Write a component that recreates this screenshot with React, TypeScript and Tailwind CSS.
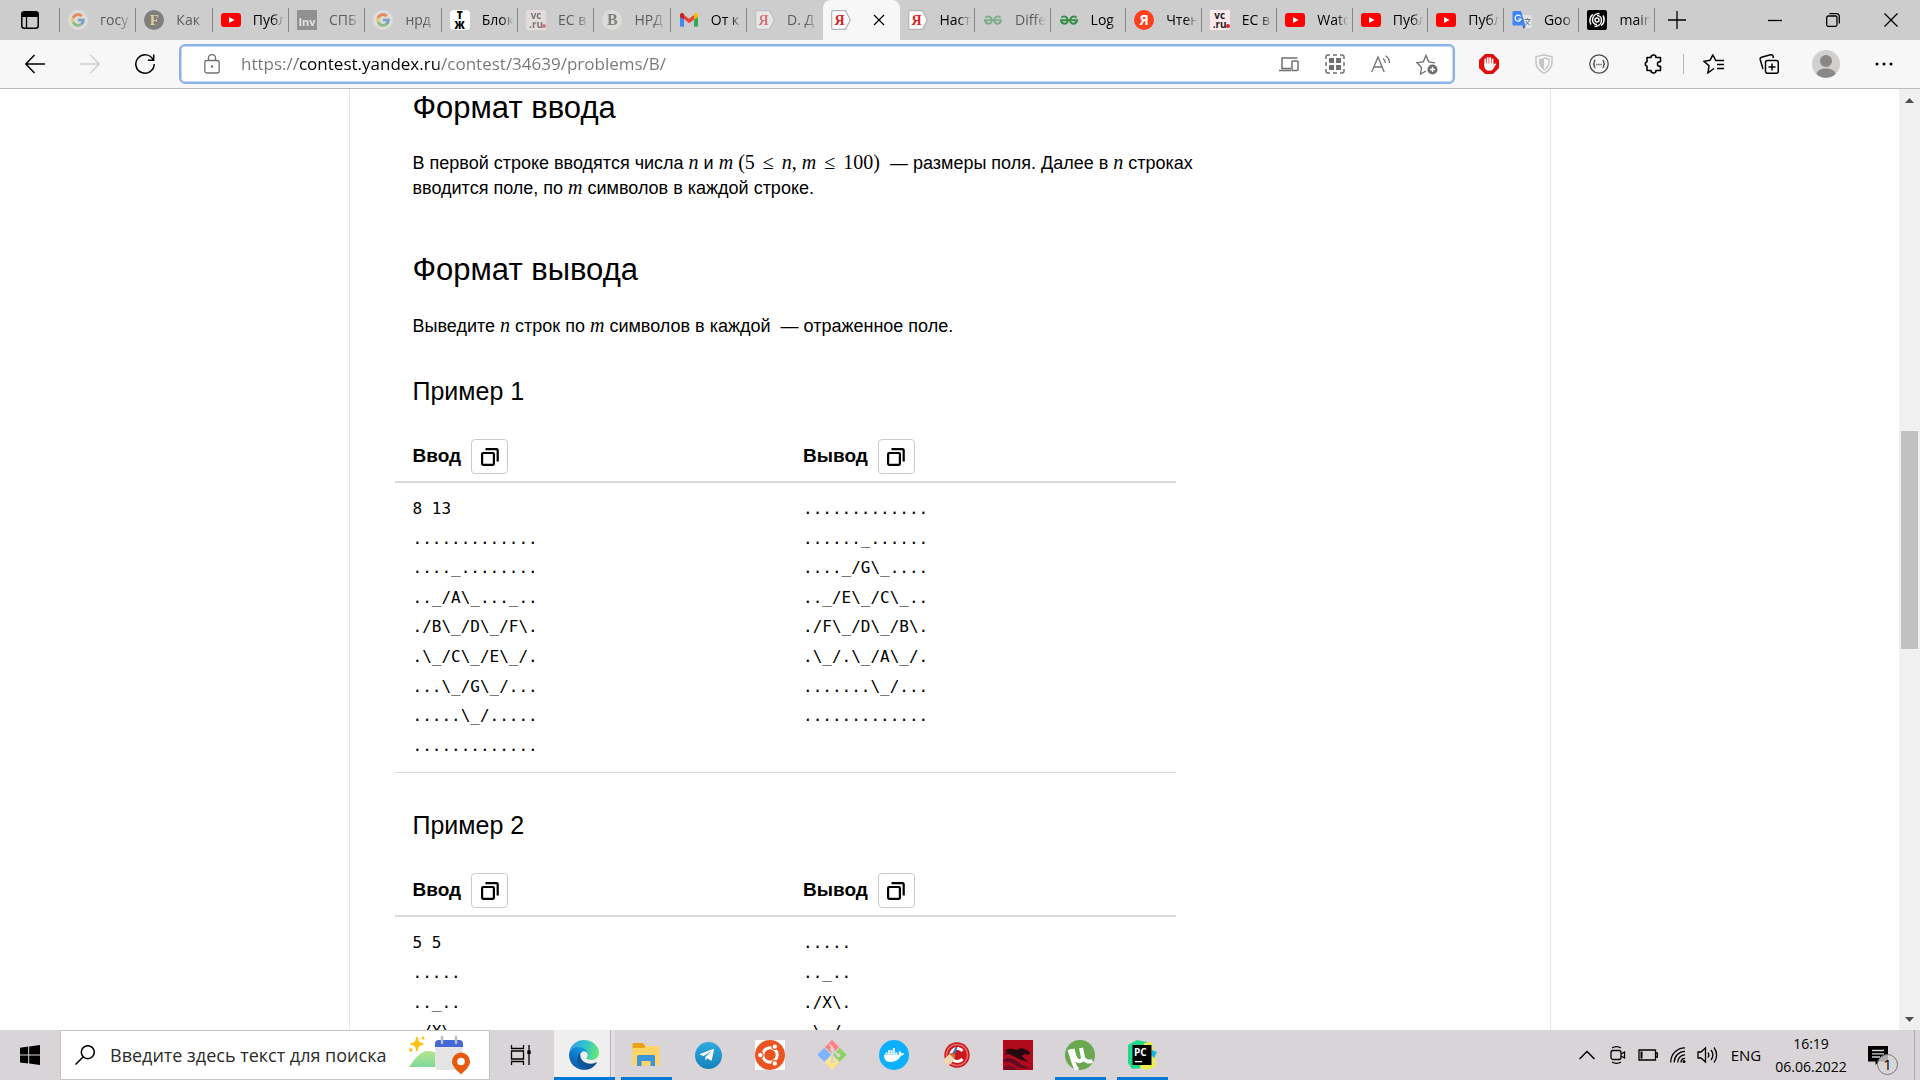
import React from 'react';
import { FaDocker, FaTelegramPlane } from 'react-icons/fa';
import { FcGoogle } from 'react-icons/fc';

type IconProps = { children: React.ReactNode; className?: string; box?: string };

function Line({ children, className = 'size-6', box = '0 0 24 24' }: IconProps) {
  return (
    <svg viewBox={box} className={className} fill="none" stroke="currentColor" strokeWidth="1.3" aria-hidden="true">
      {children}
    </svg>
  );
}

/* ---------- favicons ---------- */

const GoogleIcon = () => (
  <span className="flex size-5 items-center justify-center rounded-full bg-white/60">
    <FcGoogle className="size-4" />
  </span>
);

const YoutubeIcon = () => (
  <svg viewBox="0 0 20 20" className="size-5" aria-hidden="true">
    <rect x="0" y="3" width="20" height="14" rx="3" fill="#f00" />
    <path d="M8 7l5.500 3L8 13z" fill="#fff" />
  </svg>
);

const ForbesIcon = () => (
  <span className="flex size-5 items-center justify-center rounded-full bg-[#333] font-['Liberation_Serif',serif] text-[15px] leading-none font-bold text-[#f5d060]">
    F
  </span>
);

const InvIcon = () => (
  <span className="flex size-5 items-end justify-center bg-[#555] font-['Open_Sans',sans-serif] text-[11px] leading-[16px] font-bold text-white">
    Inv
  </span>
);

const TjIcon = () => (
  <span className="flex size-5 flex-col items-center justify-center rounded-sm bg-white font-['Open_Sans',sans-serif] text-[10px] leading-[10px] font-extrabold text-black">
    <span>Т</span>
    <span>Ж</span>
  </span>
);

const VcIcon = () => (
  <span className="relative flex size-5 flex-col items-center justify-center bg-[#fde8ec] font-['Open_Sans',sans-serif] text-[10px] leading-[9px] font-bold text-[#222]">
    <span>vc</span>
    <span>.ru</span>
    <span className="absolute right-0 bottom-0.5 size-1 rounded-full bg-[#e0202f]" />
  </span>
);

const BIcon = () => (
  <span className="flex size-5 items-center justify-center rounded-full bg-[#f0ece6] font-['Liberation_Serif',serif] text-[16px] leading-none font-bold text-[#333]">
    B
  </span>
);

const GmailIcon = () => (
  <svg viewBox="0 0 20 20" className="size-5" aria-hidden="true">
    <path d="M1 6v9.500a1.300 1.300 0 0 0 1.300 1.300H5V9z" fill="#4285f4" />
    <path d="M19 6v9.500a1.300 1.300 0 0 1-1.300 1.300H15V9z" fill="#34a853" />
    <path d="M5 9V5l5 3.800L15 5v4.500l-5 3.800z" fill="#ea4335" />
    <path d="M1 7V5c0-1.800 2-2.500 3.300-1.500L5 4v5.500z" fill="#c5221f" />
    <path d="M19 7V5c0-1.800-2-2.500-3.300-1.500L15 4v5.500z" fill="#fbbc04" />
  </svg>
);

const ContestIcon = () => (
  <svg viewBox="0 0 20 20" className="size-5" aria-hidden="true">
    <path d="M2 .7h12.500L19.300 10l-4.800 9.300H2a1.300 1.300 0 0 1-1.300-1.300V2A1.300 1.300 0 0 1 2 .7z" fill="#fff" stroke="#b3b3b3" strokeWidth="1.200" />
    <text x="8.500" y="15" textAnchor="middle" fontSize="14" fontWeight="bold" fontFamily="Liberation Serif, serif" fill="#d22">
      Я
    </text>
  </svg>
);

const GeeksIcon = () => (
  <svg viewBox="0 0 20 20" className="size-5" fill="none" stroke="#2f8d46" strokeWidth="1.900" aria-hidden="true">
    <path d="M1 10.200h18" />
    <path d="M2.500 7.800C4 5.500 7.800 6 8.800 9.800C9.200 14.800 3 15 2 10.500" />
    <path d="M17.500 7.800C16 5.500 12.200 6 11.200 9.800C10.800 14.800 17 15 18 10.500" />
  </svg>
);

const YandexIcon = () => (
  <span className="flex size-5 items-center justify-center rounded-full bg-[#fc3f1d] font-['Open_Sans',sans-serif] text-[14px] leading-none font-bold text-white">
    Я
  </span>
);

const TranslateIcon = () => (
  <svg viewBox="0 0 20 20" className="size-5" aria-hidden="true">
    <path d="M8 5h10.500a1 1 0 0 1 1 1v11a1 1 0 0 1-1 1H12z" fill="#e3e3e3" />
    <path d="M12.500 9.500h6M15.500 8.200v1.300M17.500 9.500c-.5 2.500-2 4-4 5.200M14 11c.8 1.800 2 3 3.800 3.700" stroke="#607d8b" strokeWidth="1" fill="none" />
    <path d="M10.500 15.500H14L11.500 19z" fill="#2f56c5" />
    <path d="M1.500 1H9l4.500 14.500h-12a1 1 0 0 1-1-1V2a1 1 0 0 1 1-1z" fill="#4285f4" />
    <path d="M8.600 6.500A3 3 0 1 0 9 9H6.300" stroke="#fff" strokeWidth="1.200" fill="none" />
  </svg>
);

const SwirlIcon = () => (
  <svg viewBox="0 0 20 20" className="size-5" fill="none" stroke="#fff" strokeWidth="1.500" aria-hidden="true">
    <rect width="20" height="20" rx="2" fill="#000" stroke="none" />
    <circle cx="10" cy="10" r="2" />
    <path d="M10 5.500a4.500 4.500 0 0 1 4.500 4.500c0 4-3 6.500-7 6.500M10 14.500A4.500 4.500 0 0 1 5.500 10c0-4 3-6.500 7-6.500" />
    <path d="M16 5.500c2 3 1.200 8-1.800 10.200M4 14.500C2 11.500 2.800 6.500 5.800 4.300" />
  </svg>
);

type TabInfo = { icon: React.FC; label: string; dim?: boolean };

const tabsBefore: TabInfo[] = [
  { icon: GoogleIcon, label: 'госу', dim: true },
  { icon: ForbesIcon, label: 'Как', dim: true },
  { icon: YoutubeIcon, label: 'Публ' },
  { icon: InvIcon, label: 'СПБ', dim: true },
  { icon: GoogleIcon, label: 'нрд', dim: true },
  { icon: TjIcon, label: 'Блок' },
  { icon: VcIcon, label: 'ЕС в', dim: true },
  { icon: BIcon, label: 'НРД', dim: true },
  { icon: GmailIcon, label: 'От к' },
  { icon: ContestIcon, label: 'D. Д', dim: true },
];

const tabsAfter: TabInfo[] = [
  { icon: ContestIcon, label: 'Наст' },
  { icon: GeeksIcon, label: 'Diffe', dim: true },
  { icon: GeeksIcon, label: 'Log' },
  { icon: YandexIcon, label: 'Чтен' },
  { icon: VcIcon, label: 'ЕС в' },
  { icon: YoutubeIcon, label: 'Watc' },
  { icon: YoutubeIcon, label: 'Публ' },
  { icon: YoutubeIcon, label: 'Публ' },
  { icon: TranslateIcon, label: 'Goo' },
  { icon: SwirlIcon, label: 'main' },
];

function Tab({ tab, line }: { tab: TabInfo; line: 'left' | 'right' }) {
  const Icon = tab.icon;
  return (
    <button
      type="button"
      role="tab"
      aria-selected={false}
      className={
        'flex h-6 min-w-0 flex-1 items-center gap-3 border-[#858585] pl-2 text-left ' +
        (line === 'left' ? 'border-l' : 'border-r')
      }
    >
      <span className={tab.dim ? 'shrink-0 opacity-50' : 'shrink-0'}>
        <Icon />
      </span>
      <span
        className={
          'min-w-0 flex-1 overflow-hidden [mask-image:linear-gradient(to_right,#000_55%,transparent_90%)] text-[14px] leading-6 whitespace-nowrap ' +
          (tab.dim ? 'text-[#5c5c5c]' : 'text-black')
        }
      >
        {tab.label}
      </span>
    </button>
  );
}

function TitleBar() {
  return (
    <header className="flex h-10 shrink-0 items-center bg-[#cdcdcd]">
      <button type="button" aria-label="Меню вкладок" className="flex w-[59px] shrink-0 justify-center">
        <svg viewBox="0 0 18 18" className="size-[18px]" aria-hidden="true">
          <rect x=".8" y=".8" width="16.400" height="16.400" rx="2.500" fill="none" stroke="#000" strokeWidth="1.500" />
          <path d="M1 6V3a2 2 0 0 1 2-2h12a2 2 0 0 1 2 2v3z" fill="#000" />
          <path d="M5.500 6v11" stroke="#000" strokeWidth="1.300" />
        </svg>
      </button>
      <div role="tablist" aria-label="Вкладки" className="flex h-full min-w-0 flex-1 items-center">
        <div className="flex min-w-0 flex-[763] items-center">
          {tabsBefore.map((t, i) => (
            <Tab key={i} tab={t} line="left" />
          ))}
        </div>
        <div role="tab" aria-selected="true" className="flex h-full w-[77px] shrink-0 items-center rounded-t-lg bg-[#f7f7f7] pl-2">
          <ContestIcon />
          <button type="button" aria-label="Закрыть вкладку" className="ml-[18px] p-1">
            <Line box="0 0 12 12" className="size-3">
              <path d="M1 1l10 10M11 1L1 11" />
            </Line>
          </button>
        </div>
        <div className="flex min-w-0 flex-[755] items-center">
          {tabsAfter.map((t, i) => (
            <Tab key={i} tab={t} line="right" />
          ))}
        </div>
      </div>
      <button type="button" aria-label="Новая вкладка" className="flex w-11 shrink-0 justify-center">
        <Line box="0 0 18 18" className="size-[18px]">
          <path d="M9 0v18M0 9h18" />
        </Line>
      </button>
      <div className="flex w-[221px] shrink-0 justify-end">
        <button type="button" aria-label="Свернуть" className="flex h-10 w-[58px] items-center justify-center">
          <Line box="0 0 14 14" className="size-3.5">
            <path d="M0 7.500h14" />
          </Line>
        </button>
        <button type="button" aria-label="Развернуть" className="flex h-10 w-[58px] items-center justify-center">
          <Line box="0 0 14 14" className="size-3.5">
            <rect x=".7" y="3" width="10.300" height="10.300" rx="1.500" />
            <path d="M3.500.7h7.300a2.500 2.500 0 0 1 2.500 2.500v7.300" />
          </Line>
        </button>
        <button type="button" aria-label="Закрыть" className="flex h-10 w-[58px] items-center justify-center">
          <Line box="0 0 14 14" className="size-3.5">
            <path d="M.5.5l13 13M13.500.5l-13 13" />
          </Line>
        </button>
      </div>
    </header>
  );
}

function BarButton({ label, className, children }: { label: string; className: string; children: React.ReactNode }) {
  return (
    <button type="button" aria-label={label} className={'flex h-9 shrink-0 items-center justify-center ' + className}>
      {children}
    </button>
  );
}

function Toolbar() {
  return (
    <nav className="flex h-[49px] shrink-0 items-center border-b border-[#bababa] bg-[#f7f7f7]">
      <div className="flex w-[179px] shrink-0 pl-[7px]">
        <BarButton label="Назад" className="w-[55px]">
          <Line box="0 0 20 20" className="size-5">
            <path d="M20 10H1M9.500 1L.8 10l8.700 9" strokeWidth="1.500" />
          </Line>
        </BarButton>
        <BarButton label="Вперед" className="w-[55px] text-[#cfcfcf]">
          <Line box="0 0 20 20" className="size-5">
            <path d="M0 10h19M10.500 1l8.700 9-8.700 9" strokeWidth="1.500" />
          </Line>
        </BarButton>
        <BarButton label="Обновить" className="w-[55px]">
          <Line box="0 0 20 20" className="size-5">
            <path d="M18.300 6A9.200 9.200 0 1 0 19.200 10M18.700.5V6.300H13" strokeWidth="1.500" />
          </Line>
        </BarButton>
      </div>
      <div className="flex h-10 flex-1 items-center rounded-md border-2 border-[#8ab1e8] bg-white pl-[23px] text-[#707070] ring-1 ring-[#c5d9f5] ring-inset">
        <Line box="0 0 16 20" className="h-5 w-4 shrink-0">
          <rect x=".8" y="6.500" width="14.400" height="12.500" rx="2" />
          <path d="M4.500 6.500V4a3.500 3.500 0 0 1 7 0v2.500" />
          <circle cx="8" cy="12.500" r="1.200" fill="currentColor" stroke="none" />
        </Line>
        <input
          aria-label="Адресная строка"
          defaultValue="https://contest.yandex.ru/contest/34639/problems/B/"
          className="ml-[21px] h-8 min-w-0 flex-1 bg-[linear-gradient(to_right,#767676_57px,#000_57px,#000_198px,#767676_198px)] bg-clip-text pb-0.5 text-[17px] text-transparent outline-none"
        />
        <BarButton label="Открыть на устройстве" className="w-[46px]">
          <Line box="0 0 20 18" className="h-[18px] w-5">
            <path d="M12 13.500H3V3h15.500M0 15.500h12" strokeWidth="1.500" />
            <rect x="13" y="6" width="6" height="9.500" rx="1" strokeWidth="1.500" />
          </Line>
        </BarButton>
        <BarButton label="Приложения" className="w-[46px]">
          <Line box="0 0 20 20" className="size-5">
            <path d="M1 5V3a2 2 0 0 1 2-2h2M15 1h2a2 2 0 0 1 2 2v2M19 15v2a2 2 0 0 1-2 2h-2M5 19H3a2 2 0 0 1-2-2v-2M8 1h4M8 19h4M1 8v4M19 8v4" strokeWidth="1.500" />
            <path d="M4 4h5v5H4zM11 4h5v5h-5zM4 11h5v5H4zM11 11h5v5h-5z" fill="currentColor" stroke="none" />
          </Line>
        </BarButton>
        <BarButton label="Прочесть вслух" className="w-[46px]">
          <Line box="0 0 20 18" className="h-[18px] w-5">
            <path d="M.8 17L7 2l6.200 15M3 12h8M12 3.500c1.500 1 2.300 2.700 2.300 4.500M14.500.8c2.600 1.600 4 4.200 4 7.200" />
          </Line>
        </BarButton>
        <BarButton label="Добавить в избранное" className="mr-[3px] w-[46px]">
          <Line box="0 0 22 22" className="size-[22px]">
            <path d="M10 18l-5.500 3 1-6.500L1 9.800l6.300-1L10 2.500l2.700 6.300 6.300 1" />
            <circle cx="16.500" cy="16.500" r="5" fill="currentColor" stroke="none" />
            <path d="M16.500 14v5M14 16.500h5" stroke="#fff" />
          </Line>
        </BarButton>
      </div>
      <div className="flex w-[465px] shrink-0 items-center pl-[6px]">
        <BarButton label="AdBlock" className="w-[55px]">
          <svg viewBox="0 0 20 20" className="size-5" aria-hidden="true">
            <path d="M6 0h8l6 6v8l-6 6H6l-6-6V6z" fill="#e40d0d" />
            <path d="M6.300 5.500v6M8.700 4v7M11.100 4v7M13.500 5.500v6" stroke="#fff" strokeWidth="1.800" strokeLinecap="round" />
            <path d="M5.400 9.500h9v1.500l1.200-1.300c.8-.7 1.600 0 1.200.8L14.500 14.500c-1 1.700-2 2.200-4.300 2.200-3 0-4.800-1.700-4.800-4.700z" fill="#fff" />
          </svg>
        </BarButton>
        <BarButton label="Защита" className="w-[55px] text-[#c6c6c6]">
          <Line box="0 0 20 20" className="size-5">
            <path d="M10 .8l8 2v5.500c0 5-3.500 8.700-8 11-4.500-2.300-8-6-8-11V2.800z" strokeWidth="1.500" />
            <path d="M10 4v12c-3-1.800-5-4.300-5-7.700V5z" fill="currentColor" stroke="none" />
            <path d="M10 4l5 1v3.300c0 3.400-2 5.900-5 7.700" />
          </Line>
        </BarButton>
        <BarButton label="Расширение" className="w-[55px] text-[#4a4a4a]">
          <Line box="0 0 20 20" className="size-5">
            <circle cx="10" cy="10" r="9.200" />
            <path d="M6.500 6.500c-1.500 0-1.200 1-1.200 2S5 10 4 10c1 0 1.300.5 1.300 1.500s-.3 2 1.200 2M13.500 6.500c1.500 0 1.200 1 1.200 2s.3 1.500 1.300 1.500c-1 0-1.300.5-1.300 1.500s.3 2-1.200 2" />
            <path d="M7.300 10.500h1.200M9.400 10.500h1.200M11.500 10.500h1.200" />
          </Line>
        </BarButton>
        <BarButton label="Расширения" className="w-[55px]">
          <Line box="0 0 20 20" className="size-5">
            <path d="M7 3.500a2.500 2.500 0 0 1 5 0h4.500v4.200a2.400 2.400 0 1 0 0 4.600v4.200H12a2.500 2.500 0 0 1-5 0H3v-4.200a2.400 2.400 0 0 1 0-4.600V3.500z" strokeWidth="1.600" strokeLinejoin="round" />
          </Line>
        </BarButton>
        <span className="mx-0.5 h-5 w-px bg-[#b5b5b5]" />
        <BarButton label="Избранное" className="w-[55px]">
          <Line box="0 0 22 20" className="h-5 w-[22px]">
            <path d="M11 14.500L5 18.800l1-7-5-4.500 6-1L9.800 1l3 5.500H21M14 10.500h7M14 14.500h7" strokeWidth="1.500" />
          </Line>
        </BarButton>
        <BarButton label="Коллекции" className="w-[55px]">
          <Line box="0 0 20 20" className="size-5">
            <rect x="6.500" y="6.500" width="12.800" height="12.800" rx="2" strokeWidth="1.500" />
            <path d="M13 9.500v7M9.500 13h7M4 15l-2.800-9.500a2 2 0 0 1 1.300-2.300L11.500.8a2 2 0 0 1 2.400 1.300l.6 1.900" strokeWidth="1.500" />
          </Line>
        </BarButton>
        <BarButton label="Профиль" className="w-[60px]">
          <svg viewBox="0 0 28 28" className="size-7" aria-hidden="true">
            <circle cx="14" cy="14" r="14" fill="#d2d0ce" />
            <circle cx="14" cy="11" r="6" fill="#8a8886" />
            <path d="M4.500 24c1-4 5-5.500 9.500-5.500s8.500 1.500 9.500 5.500a14 14 0 0 1-19 0z" fill="#8a8886" />
          </svg>
        </BarButton>
        <BarButton label="Параметры" className="w-[55px]">
          <svg viewBox="0 0 18 4" className="h-1 w-[18px]" aria-hidden="true">
            <circle cx="2" cy="2" r="1.500" />
            <circle cx="9" cy="2" r="1.500" />
            <circle cx="16" cy="2" r="1.500" />
          </svg>
        </BarButton>
      </div>
    </nav>
  );
}

/* ---------- problem statement ---------- */

const M = ({ children }: { children: string }) => (
  <i className="font-['Liberation_Serif',serif] text-[20px] leading-none">{children}</i>
);
const R = ({ children, className = '' }: { children: React.ReactNode; className?: string }) => (
  <span className={"font-['Liberation_Serif',serif] text-[20px] leading-none " + className}>{children}</span>
);

function CopyHead({ title }: { title: string }) {
  return (
    <th scope="col" className="w-1/2 px-[18px] pt-2 pb-[7px] text-left">
      <div className="flex items-center gap-[10px]">
        <span className="pb-0.5 text-[19px] leading-6 font-bold">{title}</span>
        <button
          type="button"
          aria-label={'Скопировать: ' + title}
          className="flex h-[35px] w-[37px] items-center justify-center rounded border border-[#ccc]"
        >
          <svg viewBox="0 0 18 18" className="size-[18px]" fill="none" stroke="#000" strokeWidth="2.200" aria-hidden="true">
            <rect x="1.100" y="5" width="11.800" height="11.800" rx="1" />
            <path d="M4.500 1.200h11.200a1 1 0 0 1 1 1V13.500" />
          </svg>
        </button>
      </div>
    </th>
  );
}

function Example({ n, input, output }: { n: number; input: string[]; output: string[] }) {
  return (
    <section>
      <h3 className="mt-9 text-[25px] leading-8">Пример {n}</h3>
      <table className="mt-6 -ml-[18px] w-[781px] table-fixed border-collapse">
        <thead>
          <tr className="border-b-2 border-[#d9d9d9]">
            <CopyHead title="Ввод" />
            <CopyHead title="Вывод" />
          </tr>
        </thead>
        <tbody>
          <tr className="border-b border-[#d9d9d9]">
            {[input, output].map((lines, i) => (
              <td key={i} className="px-[18px] pt-[11px] pb-3 align-top">
                <pre className="font-['DejaVu_Sans_Mono',monospace] text-[16px] leading-[1.85]">{lines.join('\n')}</pre>
              </td>
            ))}
          </tr>
        </tbody>
      </table>
    </section>
  );
}

const ex1in = [
  '8 13',
  '.............',
  '...._........',
  '.._/A\\_..._..',
  './B\\_/D\\_/F\\.',
  '.\\_/C\\_/E\\_/.',
  '...\\_/G\\_/...',
  '.....\\_/.....',
  '.............',
];
const ex1out = [
  '.............',
  '......_......',
  '...._/G\\_....',
  '.._/E\\_/C\\_..',
  './F\\_/D\\_/B\\.',
  '.\\_/.\\_/A\\_/.',
  '.......\\_/...',
  '.............',
];
const ex2in = ['5 5', '.....', '.._..', './X\\.', '.\\_/.', '.....'];
const ex2out = ['.....', '.._..', './X\\.', '.\\_/.', '.....'];

function Page() {
  return (
    <div className="flex min-h-0 flex-1 bg-white">
      <main className="flex min-w-0 flex-1 overflow-hidden font-['Liberation_Sans',Arial,sans-serif] text-black">
        <div className="mx-auto w-full max-w-[1202px] border-x border-[#e5e5e5] px-[63px]">
          <article className="max-w-[800px] text-[18px] leading-[25px]">
            <h2 className="pt-px text-[31px] leading-9">Формат ввода</h2>
            <p className="mt-[25px]">
              В первой строке вводятся числа <M>n</M> и <M>m</M> <R>(5</R> <R className="mx-[3px]">≤</R> <M>n</M>
              <R>, </R>
              <M>m</M> <R className="mx-[3px]">≤</R> <R>100)</R>&nbsp; — размеры поля. Далее в <M>n</M> строках
              <br />
              вводится поле, по <M>m</M> символов в каждой строке.
            </p>
            <h2 className="mt-[51px] text-[31px] leading-9">Формат вывода</h2>
            <p className="mt-[26px]">
              Выведите <M>n</M> строк по <M>m</M> символов в каждой&nbsp; — отраженное поле.
            </p>
            <Example n={1} input={ex1in} output={ex1out} />
            <Example n={2} input={ex2in} output={ex2out} />
          </article>
        </div>
      </main>
      <aside aria-label="Полоса прокрутки" className="flex w-[21px] shrink-0 flex-col items-center bg-[#f0f0f0]">
        <svg viewBox="0 0 21 20" className="h-5 w-[21px]" aria-hidden="true">
          <path d="M6 14l4.500-5 4.500 5z" fill="#505050" />
        </svg>
        <div className="flex min-h-0 w-[17px] flex-1 flex-col">
          <div className="flex-[322]" />
          <div className="flex-[219] bg-[#c1c1c1]" />
          <div className="flex-[361]" />
        </div>
        <svg viewBox="0 0 21 20" className="h-5 w-[21px]" aria-hidden="true">
          <path d="M6 7l4.500 5L15 7z" fill="#505050" />
        </svg>
      </aside>
    </div>
  );
}

/* ---------- taskbar ---------- */

const EdgeLogo = () => (
  <svg viewBox="0 0 256 256" className="size-[30px]" aria-hidden="true">
    <defs>
      <linearGradient id="edgeA" x1="60" y1="177" x2="241" y2="177" gradientUnits="userSpaceOnUse">
        <stop offset="0" stopColor="#0c59a4" />
        <stop offset="1" stopColor="#114a8b" />
      </linearGradient>
      <linearGradient id="edgeB" x1="157" y1="90" x2="46" y2="221" gradientUnits="userSpaceOnUse">
        <stop offset="0" stopColor="#1b9de2" />
        <stop offset="0.5" stopColor="#0f7fd0" />
        <stop offset="1" stopColor="#0d60ab" />
      </linearGradient>
      <linearGradient id="edgeC" x1="20" y1="60" x2="250" y2="120" gradientUnits="userSpaceOnUse">
        <stop offset="0" stopColor="#35a5e0" />
        <stop offset="0.5" stopColor="#32c5c9" />
        <stop offset="1" stopColor="#66eb6e" />
      </linearGradient>
    </defs>
    <path d="M231 190.500c-3.400 1.800-6.900 3.300-10.600 4.700a102 102 0 0 1-35.900 6.500c-47.300 0-88.500-32.600-88.500-74.300A31.500 31.500 0 0 1 112.500 100c-42.800 1.800-53.800 46.400-53.800 72.500 0 73.900 68 81.400 82.800 81.400 7.900 0 19.800-2.300 27-4.600l1.300-.4a128 128 0 0 0 66.600-52.800 4 4 0 0 0-5.400-5.600z" fill="url(#edgeA)" />
    <path d="M105.700 241.400A79 79 0 0 1 83 220a80.700 80.700 0 0 1 29.500-120c3.100-1.500 8.500-4.100 15.600-4a32.400 32.400 0 0 1 25.700 13 31.900 31.900 0 0 1 6.300 18.700c0-.2 24.500-79.600-80-79.600-43.900 0-80 41.600-80 78.200a130 130 0 0 0 12.100 56 128 128 0 0 0 156.400 67.100 75.600 75.600 0 0 1-62.800-8z" fill="url(#edgeB)" />
    <path d="M152.300 148.900c-.8 1-3.300 2.500-3.300 5.600 0 2.600 1.700 5.100 4.700 7.300 14.400 10 41.500 8.600 41.600 8.600a59.600 59.600 0 0 0 30.300-8.300 61.400 61.400 0 0 0 30.400-52.900c.3-22.400-8-37.300-11.300-43.900C223.500 23.800 177.700 0 128 0A128 128 0 0 0 0 126.200c.5-36.500 36.800-66 80-66 3.500 0 23.500.3 42 10 16.300 8.600 24.900 19 30.900 29.200 6.100 10.700 7.200 24.200 7.200 29.500 0 5.400-2.700 13.400-7.800 20z" fill="url(#edgeC)" />
  </svg>
);

const FolderLogo = () => (
  <svg viewBox="0 0 30 30" className="size-[30px]" aria-hidden="true">
    <path d="M1.500 4.500a1.500 1.500 0 0 1 1.500-1.500h9l2.500 3H27v4H1.500z" fill="#e8a317" />
    <path d="M1.500 8H13l2-2h12a1.500 1.500 0 0 1 1.500 1.500V24a1.500 1.500 0 0 1-1.500 1.500H3A1.500 1.500 0 0 1 1.500 24z" fill="#ffd466" />
    <path d="M6 26v-9.500A1.500 1.500 0 0 1 7.500 15h15a1.500 1.500 0 0 1 1.500 1.500V26h-4.500v-5h-9v5z" fill="#3a95d9" />
  </svg>
);

const TelegramLogo = () => (
  <span className="flex size-[27px] items-center justify-center rounded-full bg-linear-to-b from-[#2fa9e1] to-[#1583bb]">
    <FaTelegramPlane className="mr-0.5 size-4 text-white" />
  </span>
);

const UbuntuLogo = () => (
  <svg viewBox="0 0 30 30" className="size-[30px]" aria-hidden="true">
    <rect width="30" height="30" fill="#fff" />
    <circle cx="15" cy="15" r="15" fill="#e95420" />
    <circle cx="15" cy="15" r="7.200" fill="none" stroke="#fff" strokeWidth="3" />
    <g fill="#fff" stroke="#e95420" strokeWidth="1.200">
      <circle cx="5.300" cy="15" r="2.800" />
      <circle cx="19.800" cy="6.600" r="2.800" />
      <circle cx="19.800" cy="23.400" r="2.800" />
    </g>
  </svg>
);

const GitLogo = () => (
  <svg viewBox="0 0 30 30" className="size-[30px]" aria-hidden="true">
    <path d="M15 0l7 7-7 7-7-7z" fill="#ff8080" />
    <path d="M7.300 7.800L14 14.800l-6.700 7L.3 14.800z" fill="#80b3ff" />
    <path d="M22.700 7.800l7 7-7 7-6.700-7z" fill="#8dd35f" />
    <path d="M15 15.500l7 7-7 7-7-7z" fill="#ffe680" />
    <path d="M12.500 4.500l2.700 3V22M15.200 10l6 5" stroke="#d8d4d7" strokeWidth="1.800" fill="none" />
    <g fill="#d8d4d7">
      <circle cx="15.200" cy="9.500" r="2" />
      <circle cx="21.500" cy="15.300" r="2" />
      <circle cx="15.200" cy="21.500" r="2" />
    </g>
  </svg>
);

const DockerLogo = () => (
  <span className="flex size-[30px] items-center justify-center rounded-full bg-[#0db0ff]">
    <FaDocker className="size-5 text-white" />
  </span>
);

const CcleanerLogo = () => (
  <svg viewBox="0 0 30 30" className="size-[30px]" aria-hidden="true">
    <circle cx="16" cy="15" r="12.700" fill="#c8171d" />
    <circle cx="16" cy="15" r="10.500" fill="none" stroke="#e86a6a" strokeWidth="1.500" />
    <path d="M21.500 11a6.500 6.500 0 1 0 0 8" fill="none" stroke="#fff" strokeWidth="3" />
    <path d="M11.500 13l3.500-6.500 1.500 1L14 14.500z" fill="#3f6fb5" />
    <path d="M1.500 20.500L8.500 14l5 3.500c-1 4-3.500 7-7.500 8z" fill="#f2d6b0" />
    <path d="M8 14l3.500-1.500 3 2.500-1 3.500z" fill="#c9702e" />
  </svg>
);

const DragonLogo = () => (
  <svg viewBox="0 0 30 30" className="size-[30px]" aria-hidden="true">
    <rect width="30" height="30" fill="#b00a1c" />
    <path d="M1 11c5-3 9-2.500 12-1l5-2 5 1.500 4 3-1 2.500-4-1-3 1.500c1 3 4 4 7 7-4-2-8-2-11-4l-6-3C6 14 4 13.500 1 15c1-1.500 2-2.500 4-3z" fill="#240a10" />
    <path d="M0 20c5-3 11-2 15 2 3 3 7 5 12 6-6 1-11 0-15-3S5 21 0 22z" fill="#5d0c22" />
    <path d="M1 27c4-3 9-2 14 3H1z" fill="#7a0c22" />
  </svg>
);

const TorrentLogo = () => (
  <svg viewBox="0 0 30 30" className="size-[30px]" aria-hidden="true">
    <circle cx="15" cy="15" r="15" fill="#69a84f" />
    <path d="M4.500 9.500l4 13c1 3.200 2.300 5.700 4.200 7.300M7.500 9c1.200 5 2 9.500 4.800 11.500 3 1.800 6.200-.5 5.500-4L16 8M18 17.500c1.200 3.500 5.500 5 9.500 3.500" fill="none" stroke="#fff" strokeWidth="4" />
  </svg>
);

const PycharmLogo = () => (
  <svg viewBox="0 0 30 30" className="size-[30px]" aria-hidden="true">
    <path d="M1 5l9-5 10 2 5 5v19l-9 2-11 1-4-6z" fill="#21d789" />
    <path d="M17 3l8-1 1 8 4 2-2 5 1 9-9 4-7-2z" fill="#e9f04b" />
    <path d="M25 10l5 2-3 6-3-3z" fill="#12b5e8" />
    <rect x="5.500" y="5" width="19" height="20" fill="#000" />
    <text x="7" y="15.500" fontSize="10" fontWeight="bold" fontFamily="Open Sans, sans-serif" fill="#fff">
      PC
    </text>
    <rect x="8" y="21" width="7" height="1.300" fill="#fff" />
  </svg>
);

const apps: { name: string; icon: React.FC; open?: boolean }[] = [
  { name: 'Проводник', icon: FolderLogo, open: true },
  { name: 'Telegram', icon: TelegramLogo },
  { name: 'Ubuntu', icon: UbuntuLogo },
  { name: 'Git', icon: GitLogo },
  { name: 'Docker', icon: DockerLogo },
  { name: 'CCleaner', icon: CcleanerLogo },
  { name: 'Dragon', icon: DragonLogo },
  { name: 'Torrent', icon: TorrentLogo, open: true },
  { name: 'PyCharm', icon: PycharmLogo, open: true },
];

function SearchArt() {
  return (
    <svg viewBox="0 0 62 40" className="h-10 w-[62px] shrink-0" aria-hidden="true">
      <defs>
        <linearGradient id="hill" x1="0" y1="0" x2="0" y2="1">
          <stop offset="0" stopColor="#b5e68c" />
          <stop offset="1" stopColor="#7fd89a" />
        </linearGradient>
      </defs>
      <path d="M0 32c6-9 12-16 19-16s10 3 14 9v7z" fill="url(#hill)" />
      <path d="M8 2.500c.8 4.500 2 5.700 6 6.500-4 .8-5.200 2-6 6.500-.8-4.500-2-5.700-6-6.500 4-.8 5.200-2 6-6.500z" fill="#ffc20e" stroke="#ffc20e" strokeWidth="1.500" strokeLinejoin="round" />
      <circle cx="14" cy="3" r="1.500" fill="#ffc20e" />
      <circle cx="1.800" cy="15" r="1.800" fill="#ffc20e" />
      <rect x="26" y="5" width="28" height="30" rx="4" fill="#e4e4e4" />
      <path d="M26 12V9a4 4 0 0 1 4-4h20a4 4 0 0 1 4 4v3z" fill="#4468d4" />
      <path d="M33 2v6M47 2v6" stroke="#b9bcc4" strokeWidth="2.500" strokeLinecap="round" />
      <path d="M52 39.500c-4.500-4.500-9-8-9-13a9 9 0 0 1 18 0c0 5-4.500 8.500-9 13z" fill="#e8590c" />
      <circle cx="52" cy="26.500" r="3.800" fill="#fff" />
    </svg>
  );
}

function Taskbar() {
  return (
    <footer className="flex h-[50px] shrink-0 items-stretch bg-[#d8d4d7]">
      <button type="button" aria-label="Пуск" className="flex w-[60px] shrink-0 items-center justify-center">
        <svg viewBox="0 0 20 20" className="size-5" aria-hidden="true">
          <path d="M0 2.700L8.200 1.600v8H0zM9.200 1.400L20 0v9.600H9.200zM0 10.500h8.200v8L0 17.400zM9.200 10.500H20V20L9.200 18.600z" />
        </svg>
      </button>
      <label className="flex w-[430px] shrink-0 items-center border border-[#c4c4c4] bg-white pl-[14px]">
        <Line box="0 0 20 20" className="size-5 shrink-0">
          <circle cx="12.800" cy="7.200" r="6.500" strokeWidth="1.500" />
          <path d="M8.300 11.800L.5 19.500" strokeWidth="1.500" />
        </Line>
        <input
          type="text"
          aria-label="Поиск"
          placeholder="Введите здесь текст для поиска"
          className="ml-[15px] min-w-0 flex-1 text-[18px] outline-none placeholder:text-[#2b2b2b]"
        />
        <span className="mr-[18px]">
          <SearchArt />
        </span>
      </label>
      <button type="button" aria-label="Представление задач" className="flex w-16 shrink-0 items-center justify-center pr-0.5">
        <Line box="0 0 22 20" className="h-5 w-[22px]">
          <path d="M1.500 0v3.500h12V0M1.500 20v-3.500h12V20M1.500 6h12v8h-12zM19 0v20" />
          <path d="M17.300 5.500h3.400v3.500h-3.400z" fill="currentColor" stroke="none" />
        </Line>
      </button>
      <button type="button" aria-label="Microsoft Edge" className="flex w-[61px] shrink-0 border-b-3 border-[#0078d7]">
        <span className="flex h-full w-[57px] items-center justify-center border-r border-[#b5b5b5] bg-[#f0eff0] pt-[3px] pl-[3px]">
          <EdgeLogo />
        </span>
        <span className="h-full flex-1 bg-[#e2e0e2]" />
      </button>
      {apps.map(({ name, icon: Icon, open }) => (
        <button key={name} type="button" aria-label={name} className="flex w-[62px] shrink-0 justify-center">
          <span
            className={
              'flex h-full w-[51px] items-center justify-center border-b-3 pt-[3px] ' +
              (open ? 'border-[#0078d7]' : 'border-transparent')
            }
          >
            <Icon />
          </span>
        </button>
      ))}
      <div className="flex flex-1 items-center justify-end">
        <button type="button" aria-label="Скрытые значки" className="flex w-8 justify-center">
          <Line box="0 0 16 16" className="size-4">
            <path d="M.5 12L8 4.500l7.500 7.500" strokeWidth="1.500" />
          </Line>
        </button>
        <button type="button" aria-label="Собрание" className="flex w-[30px] justify-center">
          <Line box="0 0 16 18" className="h-[18px] w-4">
            <rect x="1" y="4.500" width="10" height="9" rx="2" />
            <path d="M11 8l3.500-2v6L11 10M2 2c2.500-1.500 6.500-1.500 9 0M2 16c2.500 1.500 6.500 1.500 9 0" />
          </Line>
        </button>
        <button type="button" aria-label="Батарея" className="flex w-[30px] justify-center">
          <Line box="0 0 20 12" className="h-3 w-5">
            <path d="M1 1h16.500v10H1zM17.500 4h1.800v4h-1.800" />
            <path d="M2.500 2.500h2v7h-2z" fill="currentColor" stroke="none" />
          </Line>
        </button>
        <button type="button" aria-label="Сеть" className="flex w-[30px] justify-center">
          <Line box="0 0 16 16" className="size-4">
            <path d="M.7 15.500C.7 7 7 .8 15 .8M4.200 15.500C4.200 9 9 4.300 15 4.300M7.700 15.500c0-4.500 3.300-7.700 7.300-7.700M11 15.500c0-2.500 1.800-4.200 4-4.200" />
            <circle cx="14" cy="14.500" r="1.500" fill="currentColor" stroke="none" />
          </Line>
        </button>
        <button type="button" aria-label="Громкость" className="flex w-[30px] justify-center">
          <Line box="0 0 22 18" className="h-[18px] w-[22px]">
            <path d="M1 6h3l4.500-4v14L4 12H1zM11 6.500c1 1.500 1 3.500 0 5M14 4c2.300 3 2.300 7 0 10M17 1.500c3.500 4.500 3.500 10.500 0 15" />
          </Line>
        </button>
        <button type="button" className="w-[46px] text-center text-[15px] leading-5">
          ENG
        </button>
        <div className="w-[84px] text-center text-[14px] leading-[23px]">
          <div>16:19</div>
          <div>06.06.2022</div>
        </div>
        <button type="button" aria-label="Уведомления: 1" className="relative ml-[15px] flex h-full w-[46px] items-center">
          <svg viewBox="0 0 20 20" className="size-5" aria-hidden="true">
            <path d="M0 1h20v15.500h-9L7.500 20v-3.500H0z" />
            <path d="M4 5.500h12M4 8.800h12M4 12h8" stroke="#d8d4d7" strokeWidth="1.300" />
          </svg>
          <span className="absolute top-6 left-[9px] flex size-[21px] items-center justify-center rounded-full border border-[#777] bg-[#d8d4d7]/80 text-[15px]">
            1
          </span>
        </button>
        <span className="mr-[5px] h-full w-px bg-[#aaa]" />
      </div>
    </footer>
  );
}

export default function App() {
  return (
    <div className="flex h-screen flex-col overflow-hidden bg-white font-['Open_Sans','Noto_Sans',sans-serif] text-black">
      <TitleBar />
      <Toolbar />
      <Page />
      <Taskbar />
    </div>
  );
}
